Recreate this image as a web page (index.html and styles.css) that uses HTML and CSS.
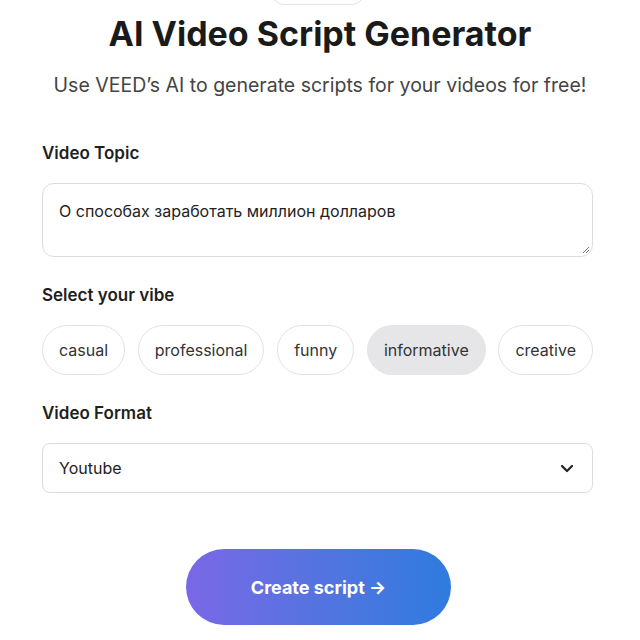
FILE: index.html
```html
<!DOCTYPE html>
<html>
<head>
<meta charset="utf-8">
<link rel="stylesheet" href="styles.css">
</head>
<body>
<div class="page">
  <div class="top-pill"></div>
  <h1 class="title">AI Video Script Generator</h1>
  <p class="subtitle">Use VEED’s AI to generate scripts for your videos for free!</p>

  <div class="field">
    <div class="label">Video Topic</div>
    <div class="textarea">О способах заработать миллион долларов
      <svg class="grip" width="8" height="8" viewBox="0 0 8 8"><path d="M7 1L1 7M7 4L4 7" stroke="#777" stroke-width="1"/></svg>
    </div>
  </div>

  <div class="field vibe">
    <div class="label">Select your vibe</div>
    <div class="pills">
      <span class="pill">casual</span>
      <span class="pill">professional</span>
      <span class="pill">funny</span>
      <span class="pill active">informative</span>
      <span class="pill">creative</span>
    </div>
  </div>

  <div class="field format">
    <div class="label">Video Format</div>
    <div class="select">
      <span>Youtube</span>
      <svg width="14" height="9" viewBox="0 0 14 9"><path d="M2 2l5 5 5-5" fill="none" stroke="#222" stroke-width="2.2" stroke-linecap="round" stroke-linejoin="round"/></svg>
    </div>
  </div>

  <div class="actions">
    <button class="cta">Create script <span class="arrow">→</span></button>
  </div>
</div>
</body>
</html>
```
FILE: styles.css
```css
* { box-sizing: border-box; }
html, body { margin: 0; padding: 0; background: #fff; }
body { font-family: Inter, "Noto Sans", sans-serif; color: #1f1f1f; }
.page { width: 640px; padding: 0 47px 0 42px; position: relative; }
.top-pill {
  position: absolute; left: 272px; top: -20px; width: 92px; height: 25px;
  border: 1px solid #e2e2e2; border-radius: 12px; background: #fff;
}
.title {
  margin: 0 -47px 0 -42px; padding-top: 14px; text-align: center;
  font-size: 34px; font-weight: 700; letter-spacing: 0; line-height: 40px;
  color: #1a1a1a;
}
.subtitle {
  margin: 18px -47px 0 -42px; text-align: center; font-size: 19.5px; color: #444;
  line-height: 26px; font-weight: 400;
}
.field { margin-top: 43px; }
.label { font-size: 17px; font-weight: 600; color: #1f1f1f; line-height: 24px; }
.textarea {
  position: relative; margin-top: 18px; height: 74px; border: 1px solid #dcdcdc; border-radius: 12px;
  padding: 17px 16px; font-size: 16px; line-height: 20px; color: #222;
}
.grip { position: absolute; right: 2px; bottom: 2px; }
.vibe { margin-top: 26px; }
.pills { display: flex; justify-content: space-between; margin-top: 18px; }
.pill {
  height: 50px; border: 1px solid #e2e2e2; border-radius: 25px; padding: 0 16px;
  display: flex; align-items: center; font-size: 16px; color: #333; background: #fff;
}
.pill.active { background: #e6e6e8; border-color: #e6e6e8; }
.format { margin-top: 26px; }
.select {
  margin-top: 18px; height: 50px; border: 1px solid #dcdcdc; border-radius: 8px;
  display: flex; align-items: center; justify-content: space-between; padding: 0 18px 0 16px;
  font-size: 16px; color: #222;
}
.actions { display: flex; justify-content: center; margin-top: 56px; }
.cta {
  width: 265px; height: 76px; border: none; border-radius: 38px; margin-left: 2px;
  background: linear-gradient(90deg, #7a68e6 0%, #5873e0 45%, #2f7bdf 100%);
  color: #fff; font-family: Inter, sans-serif; font-size: 18px; font-weight: 700;
}
.arrow { font-weight: 700; }
```
